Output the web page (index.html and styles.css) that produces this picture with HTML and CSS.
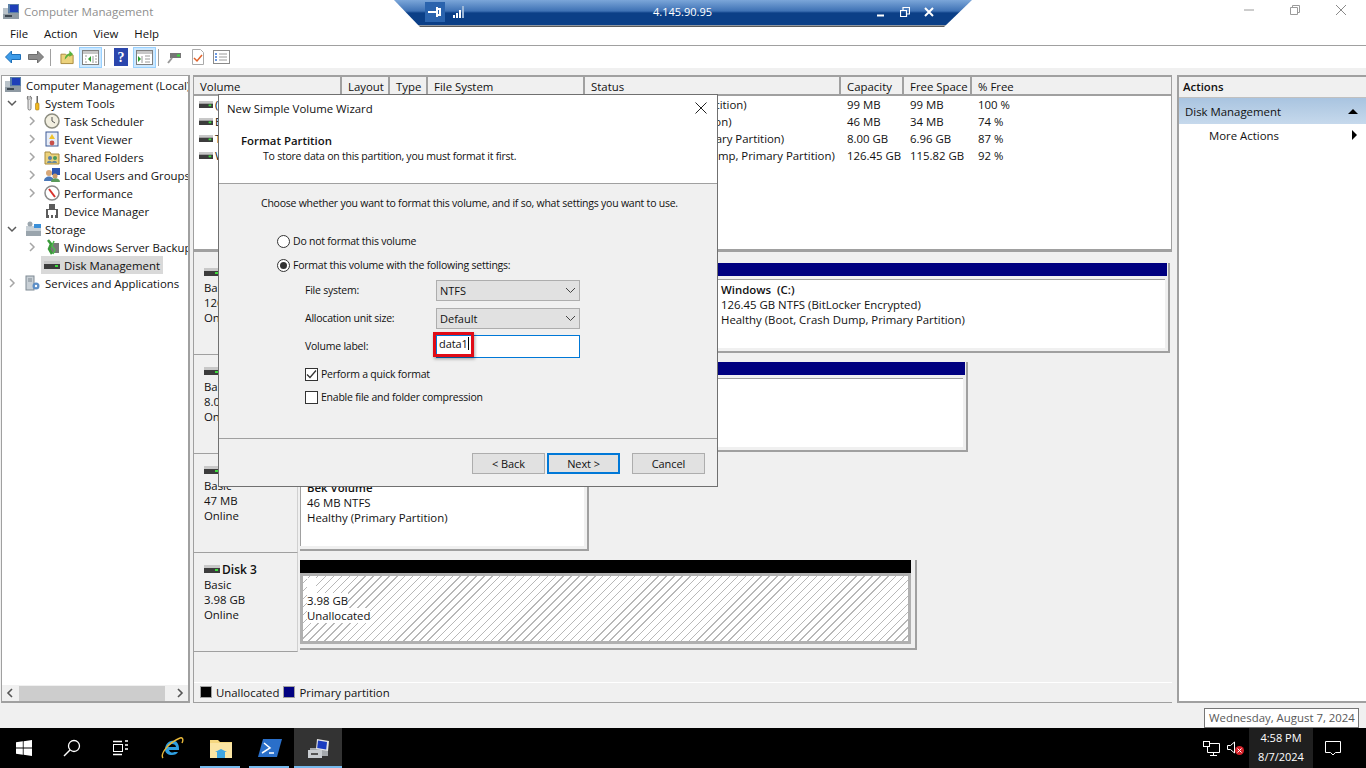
FILE: index.html
```html
<!DOCTYPE html>
<html>
<head>
<title>Computer Management</title>
<link rel="stylesheet" href="styles.css">
</head>
<body>

<svg class="defs" width="0" height="0">
  <symbol id="disk" viewBox="0 0 16 10">
    <rect x="0" y="1" width="16" height="3" fill="#c8c8c8"/>
    <rect x="0" y="4" width="16" height="5" fill="#3c3c3c"/>
    <rect x="11" y="5" width="3" height="2" fill="#3ddc3d"/>
  </symbol>
  <symbol id="computer" viewBox="0 0 18 18">
    <rect x="6" y="1" width="11" height="9" fill="#5b7fa8"/>
    <rect x="8" y="2" width="8" height="7" fill="#1f3fb8"/>
    <rect x="1" y="10" width="16" height="6" fill="#8f9aa3"/>
    <rect x="3" y="12" width="7" height="2" fill="#3c4650"/>
    <rect x="1" y="5" width="5" height="6" fill="#b9c2c9"/>
  </symbol>
  <symbol id="open" viewBox="0 0 10 10">
    <path d="M1 3l4 4 4-4" fill="none" stroke="#5a5a5a" stroke-width="1.5"/>
  </symbol>
  <symbol id="closed" viewBox="0 0 10 10">
    <path d="M3 1l4 4-4 4" fill="none" stroke="#a6a6a6" stroke-width="1.5"/>
  </symbol>
</svg>

<div class="window">
  <div class="titlebar">
    <svg class="app-icon" width="18" height="18"><use href="#computer"/></svg>
    <span class="title-text">Computer Management</span>
    <div class="win-btns">
      <svg width="46" height="20" viewBox="0 0 46 20"><path d="M18 10h10" stroke="#9a9a9a"/></svg>
      <svg width="46" height="20" viewBox="0 0 46 20"><path d="M18.5 7.5h7v7h-7zM20.5 7.5v-2h7v7h-2" fill="none" stroke="#9a9a9a"/></svg>
      <svg width="46" height="20" viewBox="0 0 46 20"><path d="M18 5l10 10M28 5l-10 10" stroke="#8a8a8a"/></svg>
    </div>
  </div>

  <div class="menubar">
    <span>File</span><span>Action</span><span>View</span><span>Help</span>
  </div>

  <div class="toolbar">
    <svg class="tb-back" width="16" height="14" viewBox="0 0 16 14"><path d="M.5 7l6-6v3.500h9v5h-9v3.500z" fill="#3d9be8" stroke="#1d6fb8"/></svg>
    <svg class="tb-fwd" width="16" height="14" viewBox="0 0 16 14"><path d="M15.500 7l-6-6v3.500h-9v5h9v3.500z" fill="#8c8c8c" stroke="#6e6e6e"/></svg>
    <i class="tb-sep first"></i>
    <svg class="tb-up" width="15" height="16" viewBox="0 0 16 16"><path d="M1 5h5l1 1h7v9H1z" fill="#ecd27c" stroke="#a88a3c"/><path d="M5 11c0-4 2-6 5-7V1l4 4-4 3V6c-2 1-3 3-5 5z" fill="#58b03c"/></svg>
    <span class="tb-on"><svg width="17" height="15" viewBox="0 0 17 15"><rect x=".5" y=".5" width="16" height="14" fill="#fff" stroke="#7f7f7f"/><rect x="1" y="1" width="15" height="3" fill="#c7c7c7"/><path d="M11 6v7M3 6h2M3 9h1M3 12h2" stroke="#9a9a9a"/><path d="M9 6L6 9l3 3z" fill="#2e9e2e"/><path d="M13 6h2M13 9h2M13 12h2" stroke="#9a9a9a"/></svg></span>
    <i class="tb-sep"></i>
    <svg class="tb-help" width="14" height="18" viewBox="0 0 14 18"><rect width="14" height="18" fill="#2b46ad"/><text x="7" y="14" text-anchor="middle" class="help-q">?</text></svg>
    <span class="tb-on tb-on2"><svg width="17" height="15" viewBox="0 0 17 15"><rect x=".5" y=".5" width="16" height="14" fill="#fff" stroke="#7f7f7f"/><rect x="1" y="1" width="15" height="3" fill="#c7c7c7"/><path d="M6 6v7M9 6h5M9 9h5M9 12h5" stroke="#9a9a9a"/><path d="M2 6l3 3-3 3z" fill="#2e9e2e"/></svg></span>
    <i class="tb-sep"></i>
    <svg class="tb-conn" width="15" height="14" viewBox="0 0 15 14"><path d="M3 3h11v5H3z" fill="#777"/><rect x="10" y="4.500" width="3" height="2" fill="#3ddc3d"/><path d="M5 8L1 13" stroke="#999" stroke-width="2"/></svg>
    <svg class="tb-doc" width="12" height="16" viewBox="0 0 12 16"><path d="M.5.5h8l3 3v12H.5z" fill="#fff" stroke="#aaa"/><path d="M2 9l3 3 5-6" fill="none" stroke="#e0622a" stroke-width="1.5"/></svg>
    <svg class="tb-list" width="17" height="14" viewBox="0 0 17 14"><rect x=".5" y=".5" width="16" height="13" fill="#fff" stroke="#8a8a8a"/><path d="M6 4h8M6 7h8M6 10h8" stroke="#9a9a9a"/><path d="M2 4h2M2 7h2M2 10h2" stroke="#3b78d8" stroke-width="1.5"/></svg>
  </div>

  <div class="main">
    <div class="tree">
      <div class="tree-rows">
        <div class="node"><svg width="18" height="18"><use href="#computer"/></svg><span>Computer Management (Local)</span></div>
        <div class="node lvl1">
          <svg class="arrow" width="10" height="10"><use href="#open"/></svg>
          <svg class="ico" width="16" height="16" viewBox="0 0 16 16"><path d="M3 1v2.500l1 1 1-1V1c2 1 2 3 1 4v8.500a1.500 1.500 0 0 1-3 0V5C2 4 2 2 3 1z" fill="#e4e4e4" stroke="#666" stroke-width=".8"/><rect x="11.500" y="1" width="1.500" height="7" fill="#666"/><rect x="10.500" y="8" width="3.500" height="7" rx="1" fill="#f0b820" stroke="#a87a10" stroke-width=".6"/></svg>
          <span>System Tools</span>
        </div>
        <div class="node lvl2">
          <svg class="arrow" width="10" height="10"><use href="#closed"/></svg>
          <svg class="ico" width="16" height="16" viewBox="0 0 16 16"><circle cx="8" cy="8" r="7" fill="#f2efe0" stroke="#8d8d80" stroke-width="1.5"/><path d="M8 4v4l3 2" fill="none" stroke="#555"/></svg>
          <span>Task Scheduler</span>
        </div>
        <div class="node lvl2">
          <svg class="arrow" width="10" height="10"><use href="#closed"/></svg>
          <svg class="ico" width="16" height="16" viewBox="0 0 16 16"><rect x="2" y="1" width="12" height="14" fill="#e8eef8" stroke="#3c5a96"/><path d="M8 3l3 5H5z" fill="#eec22c"/><circle cx="8" cy="12" r="2.4" fill="#c8504a"/></svg>
          <span>Event Viewer</span>
        </div>
        <div class="node lvl2">
          <svg class="arrow" width="10" height="10"><use href="#closed"/></svg>
          <svg class="ico" width="16" height="16" viewBox="0 0 16 16"><path d="M1 3h5l1 2h8v10H1z" fill="#ecd27c" stroke="#a88a3c"/><circle cx="6" cy="9" r="2" fill="#5a7fa8"/><circle cx="11" cy="9" r="2" fill="#4a9a5a"/><path d="M3 14c0-3 5-3 5 0zM8 14c0-3 5-3 5 0z" fill="#6a8a9a"/></svg>
          <span>Shared Folders</span>
        </div>
        <div class="node lvl2">
          <svg class="arrow" width="10" height="10"><use href="#closed"/></svg>
          <svg class="ico" width="16" height="16" viewBox="0 0 16 16"><rect x="8" y="1" width="8" height="7" fill="#2c55b0"/><circle cx="5" cy="6" r="3" fill="#d8a878"/><path d="M0 14c0-6 10-6 10 0z" fill="#4a78b8"/><circle cx="11" cy="9" r="2.5" fill="#c89868"/><path d="M7 15c0-5 9-5 9 0z" fill="#5a9a5a"/></svg>
          <span>Local Users and Groups</span>
        </div>
        <div class="node lvl2">
          <svg class="arrow" width="10" height="10"><use href="#closed"/></svg>
          <svg class="ico" width="16" height="16" viewBox="0 0 16 16"><circle cx="8" cy="8" r="7" fill="#fff" stroke="#8a8a8a" stroke-width="1.5"/><path d="M5 4l6 8" stroke="#d8322c" stroke-width="2"/></svg>
          <span>Performance</span>
        </div>
        <div class="node lvl2">
          <i class="arrow-gap"></i>
          <svg class="ico" width="16" height="16" viewBox="0 0 16 16"><path d="M5 1h6v5h3v9H2V6h3z" fill="#5c5c5c"/><rect x="4" y="7" width="8" height="5" fill="#fff"/><rect x="5" y="12" width="2" height="3" fill="#fff"/><rect x="9" y="12" width="2" height="3" fill="#fff"/></svg>
          <span>Device Manager</span>
        </div>
        <div class="node lvl1">
          <svg class="arrow" width="10" height="10"><use href="#open"/></svg>
          <svg class="ico" width="16" height="16" viewBox="0 0 16 16"><rect x="1" y="10" width="15" height="5" fill="#9aa5ad"/><rect x="1" y="5" width="15" height="5" fill="#c8d0d6"/><rect x="9" y="3" width="7" height="4" fill="#3a8fd8"/><circle cx="5" cy="3" r="2.5" fill="#9aa5ad"/></svg>
          <span>Storage</span>
        </div>
        <div class="node lvl2">
          <svg class="arrow" width="10" height="10"><use href="#closed"/></svg>
          <svg class="ico" width="16" height="16" viewBox="0 0 16 16"><rect x="6" y="4" width="9" height="10" fill="#777"/><path d="M4 1l3 4-2 5 3 5" fill="none" stroke="#3a9a3a" stroke-width="2.5"/><path d="M10 2l-2 5 3 4-2 4" fill="none" stroke="#4cba4c" stroke-width="1.500"/></svg>
          <span>Windows Server Backup</span>
        </div>
        <div class="node lvl2 selected">
          <i class="arrow-gap"></i>
          <svg class="ico" width="16" height="10"><use href="#disk"/></svg>
          <span>Disk Management</span>
        </div>
        <div class="node lvl1">
          <svg class="arrow" width="10" height="10"><use href="#closed"/></svg>
          <svg class="ico" width="16" height="16" viewBox="0 0 16 16"><rect x="1" y="1" width="8" height="14" fill="#c9d0d6" stroke="#7f8a93"/><path d="M3 4h4M3 6h4" stroke="#7f8a93"/><circle cx="11" cy="11" r="3.500" fill="#5d8fc7"/><circle cx="11" cy="11" r="1.200" fill="#fff"/></svg>
          <span>Services and Applications</span>
        </div>
      </div>
      <div class="hscroll">
        <svg width="8" height="10" viewBox="0 0 8 10"><path d="M6 1L2 5l4 4" fill="none" stroke="#555" stroke-width="1.6"/></svg>
        <i class="thumb"></i>
        <svg width="8" height="10" viewBox="0 0 8 10"><path d="M2 1l4 4-4 4" fill="none" stroke="#555" stroke-width="1.6"/></svg>
      </div>
    </div>

    <div class="center">
      <div class="listview">
        <div class="cols head">
          <div>Volume</div><div>Layout</div><div>Type</div><div>File System</div><div>Status</div><div>Capacity</div><div>Free Space</div><div>% Free</div>
        </div>
        <div class="cols row">
          <div class="vol"><svg width="14" height="9"><use href="#disk"/></svg>(Disk 0 partition 1)</div><div></div><div></div><div></div><div>Healthy (EFI System Partition)</div><div>99 MB</div><div>99 MB</div><div>100 %</div>
        </div>
        <div class="cols row">
          <div class="vol"><svg width="14" height="9"><use href="#disk"/></svg>Bek Volume</div><div></div><div></div><div></div><div>Healthy (Primary Partition)</div><div>46 MB</div><div>34 MB</div><div>74 %</div>
        </div>
        <div class="cols row">
          <div class="vol"><svg width="14" height="9"><use href="#disk"/></svg>Temporary Storage</div><div></div><div></div><div></div><div>Healthy (Page File, Primary Partition)</div><div>8.00 GB</div><div>6.96 GB</div><div>87 %</div>
        </div>
        <div class="cols row">
          <div class="vol"><svg width="14" height="9"><use href="#disk"/></svg>Windows (C:)</div><div></div><div></div><div></div><div>Healthy (Boot, Crash Dump, Primary Partition)</div><div>126.45 GB</div><div>115.82 GB</div><div>92 %</div>
        </div>
      </div>

      <div class="disks">
        <div class="disk">
          <div class="disk-info"><div class="disk-name"><svg width="16" height="10"><use href="#disk"/></svg><b>Disk 0</b></div><div>Basic</div><div>126.64 GB</div><div>Online</div></div>
          <div class="vols w-disk0">
            <div class="part part-small"><div class="part-bar"></div><div class="part-body"></div></div>
            <div class="part part-grow">
              <div class="part-bar"></div>
              <div class="part-body"><b>Windows &nbsp;(C:)</b><div>126.45 GB NTFS (BitLocker Encrypted)</div><div>Healthy (Boot, Crash Dump, Primary Partition)</div></div>
            </div>
          </div>
        </div>
        <div class="disk">
          <div class="disk-info"><div class="disk-name"><svg width="16" height="10"><use href="#disk"/></svg><b>Disk 1</b></div><div>Basic</div><div>8.00 GB</div><div>Online</div></div>
          <div class="vols w-disk1">
            <div class="part part-grow"><div class="part-bar"></div><div class="part-body"></div></div>
          </div>
        </div>
        <div class="disk">
          <div class="disk-info"><div class="disk-name"><svg width="16" height="10"><use href="#disk"/></svg><b>Disk 2</b></div><div>Basic</div><div>47 MB</div><div>Online</div></div>
          <div class="vols w-disk2">
            <div class="part part-grow"><div class="part-bar"></div><div class="part-body"><b>Bek Volume</b><div>46 MB NTFS</div><div>Healthy (Primary Partition)</div></div></div>
          </div>
        </div>
        <div class="disk">
          <div class="disk-info"><div class="disk-name"><svg width="16" height="10"><use href="#disk"/></svg><b>Disk 3</b></div><div>Basic</div><div>3.98 GB</div><div>Online</div></div>
          <div class="vols w-disk3">
            <div class="part part-grow free"><div class="part-bar"></div><div class="hatch"><span>&nbsp;&nbsp;&nbsp;</span><span>3.98 GB</span><span>Unallocated</span></div></div>
          </div>
        </div>
      </div>

      <div class="legend">
        <i class="swatch black"></i><span>Unallocated</span>
        <i class="swatch navy"></i><span>Primary partition</span>
      </div>
    </div>

    <div class="actions">
      <div class="act-head">Actions</div>
      <div class="act-strip"><span>Disk Management</span><i class="tri-up"></i></div>
      <div class="act-item"><span>More Actions</span><i class="tri-right"></i></div>
    </div>
  </div>

  <div class="taskbar">
    <div class="task"><svg width="16" height="16" viewBox="0 0 16 16"><path d="M0 2.3l6.8-1v6.3H0zM7.6 1.2L16 0v7.6H7.6zM0 8.400h6.800v6.300l-6.800-1zM7.600 8.400H16V16l-8.400-1.200z" fill="#fff"/></svg></div>
    <div class="task"><svg width="18" height="18" viewBox="0 0 18 18"><circle cx="11" cy="7" r="5.500" fill="none" stroke="#fff" stroke-width="1.300"/><path d="M7 11l-6 6" stroke="#fff" stroke-width="1.500"/></svg></div>
    <div class="task"><svg width="17" height="16" viewBox="0 0 17 16"><path d="M1 1.500h9M1 14.500h9M13 1h3M13 5h3M13 9h3" stroke="#fff" stroke-width="1.500"/><rect x="1.500" y="4.500" width="9" height="7" fill="none" stroke="#fff"/></svg></div>
    <div class="task pin first-pin"><svg width="24" height="24" viewBox="0 0 24 24"><path d="M18 8c-1-3-4-4-7-3-4 1-6 5-6 8 0 4 3 6 7 6 3 0 5-1 6-3h-4c-1 1-4 1-5-2h10c0-2 0-4-1-6zM8 11c0-2 2-3 4-3s4 1 4 3z" fill="#2f9fe0"/><path d="M3 22C0 18 8 7 20 2c2-1 4 1 2 5" fill="none" stroke="#e8b83a" stroke-width="1.400"/></svg></div>
    <div class="task pin running"><svg width="22" height="20" viewBox="0 0 22 20"><path d="M0 2h8l2 2h12v16H0z" fill="#f5d77f"/><path d="M0 5h22v15H0z" fill="#fbe5a3"/><path d="M7 14h8v6H7z" fill="#3fa5e0"/><path d="M5 14h12l-6-3z" fill="#3fa5e0"/></svg></div>
    <div class="task pin running"><svg width="24" height="18" viewBox="0 0 24 18"><path d="M5 0h19l-5 18H0z" fill="#2a6fc9"/><path d="M6 4l6 5-8 5M11 14h5" fill="none" stroke="#fff" stroke-width="1.500"/></svg></div>
    <div class="task pin running active"><svg width="24" height="24" viewBox="0 0 24 24"><path d="M4 12h18v8H4z" fill="#a4a8ac"/><path d="M2 14h14v8H2z" fill="#c8ccd0"/><path d="M11 3l12 2-1 10-12-2z" fill="#e6e6e6"/><path d="M12 4.500l9 1.500-.8 7.500-9-1.500z" fill="#1a3cc0"/><rect x="5" y="17" width="7" height="2" fill="#555"/></svg></div>

    <div class="tray">
      <svg class="tray-net" width="17" height="15" viewBox="0 0 17 15"><path d="M4.500 2.500h12v9h-12zM10.500 11.500v3M7 14.500h7" fill="none" stroke="#fff"/><rect x=".5" y=".5" width="6" height="5" fill="#000" stroke="#fff"/></svg>
      <svg class="tray-vol" width="18" height="16" viewBox="0 0 18 16"><path d="M.5 5.500h3l4-3.500v11l-4-3.500h-3z" fill="none" stroke="#fff"/><circle cx="12.500" cy="10.500" r="4.500" fill="#d8222a"/><path d="M10.500 8.500l4 4M14.500 8.500l-4 4" stroke="#fff"/></svg>
      <div class="clock"><div>4:58 PM</div><div>8/7/2024</div></div>
      <svg class="tray-note" width="16" height="15" viewBox="0 0 16 15"><path d="M.5.500h15v11h-5l-2.500 2.500-2.500-2.500h-5z" fill="none" stroke="#fff"/></svg>
    </div>
  </div>
</div>

<div class="tooltip">Wednesday, August 7, 2024</div>

<div class="rdp-bar">
  <div class="rdp-left">
    <span class="rdp-pin"><svg width="14" height="10" viewBox="0 0 14 10"><path d="M0 5h9M9 0v10M12 1v8M9 2h3M9 8h3" stroke="#fff" stroke-width="2"/></svg></span>
    <svg width="12" height="12" viewBox="0 0 12 12"><path d="M0 9h2v3H0zM3 7h2v5H3zM6 4h2v8H6z" fill="#fff"/><path d="M9 0h2v12H9z" fill="#9db8d8"/></svg>
  </div>
  <span class="rdp-ip">4.145.90.95</span>
  <div class="rdp-right">
    <svg width="10" height="10" viewBox="0 0 10 10"><path d="M1 8.500h7" stroke="#fff" stroke-width="2"/></svg>
    <svg width="10" height="10" viewBox="0 0 10 10"><path d="M.5 3.500h6v6h-6zM3 3V.5h6.500V7H7" fill="none" stroke="#fff" stroke-width="1.200"/></svg>
    <svg width="10" height="10" viewBox="0 0 10 10"><path d="M1 1l8 8M9 1l-8 8" stroke="#fff" stroke-width="2"/></svg>
  </div>
</div>

<div class="dialog">
  <div class="dlg-top">
    <div class="dlg-title"><span>New Simple Volume Wizard</span>
      <svg width="12" height="12" viewBox="0 0 12 12"><path d="M.5.500l11 11M11.500.500l-11 11" stroke="#222" stroke-width="1"/></svg>
    </div>
    <div class="dlg-h1">Format Partition</div>
    <div class="dlg-h2">To store data on this partition, you must format it first.</div>
  </div>
  <div class="dlg-body">
    <p class="dlg-q">Choose whether you want to format this volume, and if so, what settings you want to use.</p>
    <div class="radio-row"><i class="radio"></i><span>Do not format this volume</span></div>
    <div class="radio-row second"><i class="radio on"></i><span>Format this volume with the following settings:</span></div>
    <div class="fields">
      <label>File system:</label>
      <div class="combo"><span>NTFS</span><svg width="11" height="7" viewBox="0 0 11 7"><path d="M1 1l4.500 4.500L10 1" fill="none" stroke="#444"/></svg></div>
      <label>Allocation unit size:</label>
      <div class="combo"><span>Default</span><svg width="11" height="7" viewBox="0 0 11 7"><path d="M1 1l4.500 4.500L10 1" fill="none" stroke="#444"/></svg></div>
      <label>Volume label:</label>
      <div class="textbox"><span>data1</span><i class="caret"></i><i class="redbox"></i></div>
    </div>
    <div class="check-row"><i class="check"><svg width="11" height="11" viewBox="0 0 11 11"><path d="M1 5.500l3 3 6-7" fill="none" stroke="#333" stroke-width="1.300"/></svg></i><span>Perform a quick format</span></div>
    <div class="check-row second"><i class="check"></i><span>Enable file and folder compression</span></div>
  </div>
  <div class="dlg-foot">
    <button class="btn">&lt; Back</button>
    <button class="btn default">Next &gt;</button>
    <button class="btn cancel">Cancel</button>
  </div>
</div>

</body>
</html>
```

FILE: styles.css
```css
html, body {
    margin: 0;
    padding: 0;
    height: 100%;
    overflow: hidden;
}
body {
    background: #f0f0f0;
    font-family: "Open Sans", "Liberation Sans", sans-serif;
    font-size: 11.4px;
    color: #111;
}
svg {
    display: block;
    flex: none;
}
.defs {
    position: absolute;
}
b {
    font-weight: 600;
}

.window {
    display: flex;
    flex-direction: column;
    height: 768px;
}

/* title bar */
.titlebar {
    height: 24px;
    background: #fff;
    display: flex;
    align-items: center;
    padding-left: 2px;
}
.title-text {
    margin: 0 0 2px 4px;
    color: #8f8f8f;
    font-size: 11.6px;
}
.win-btns {
    margin-left: auto;
    margin-right: 2px;
    display: flex;
    align-self: flex-start;
}

.menubar {
    background: #fff;
    display: flex;
    align-items: center;
    border-bottom: 1px solid #a0a0a0;
    padding: 0 0 2px 10px;
    height: 19px;
    gap: 16px;
}
.toolbar {
    height: 22px;
    background: #fff;
    display: flex;
    align-items: center;
    padding-left: 5px;
}
.tb-fwd { margin-left: 7px; }
.tb-sep {
    width: 1px;
    height: 17px;
    background: #a0a0a0;
    margin-left: 2px;
}
.tb-sep.first { margin-left: 6px; }
.tb-up { margin-left: 9px; }
.tb-on {
    width: 21px;
    height: 19px;
    margin-left: 4px;
    background: #cce8ff;
    border: 1px solid #99d1ff;
    display: flex;
    align-items: center;
    justify-content: center;
}
.tb-help { margin-left: 9px; }
.tb-on2 { margin-left: 5px; }
.tb-conn { margin-left: 8px; }
.tb-doc { margin-left: 10px; }
.tb-list { margin-left: 9px; }
.help-q {
    fill: #fff;
    font: bold 14px "Liberation Serif", serif;
}

/* three panes */
.main {
    margin-top: 7px;
    height: 628px;
    display: flex;
    padding-left: 1px;
}
.tree {
    width: 186px;
    flex: none;
    background: #fff;
    border: 1px solid #a0a0a0;
    border-width: 1px 2px 2px 1px;
    display: flex;
    flex-direction: column;
    overflow: hidden;
}
.tree-rows {
    flex: 1;
    white-space: nowrap;
}
.node {
    height: 18px;
    display: flex;
    align-items: center;
    padding-left: 2px;
}
.node span {
    margin-left: 4px;
}
.lvl1 { padding-left: 5px; }
.lvl1 .ico { margin-left: 8px; }
.lvl2 { padding-left: 25px; }
.lvl2 .ico { margin-left: 7px; }
.lvl2 span { padding-right: 3px; }
.arrow, .arrow-gap {
    width: 10px;
    height: 10px;
    flex: none;
}
.selected {
    background: linear-gradient(#d9d9d9, #d9d9d9) no-repeat 39px 0 / 122px 18px;
}
.hscroll {
    height: 16px;
    background: #f0f0f0;
    display: flex;
    align-items: center;
    padding-left: 4px;
    gap: 5px;
}
.thumb {
    width: 146px;
    height: 15px;
    background: #cdcdcd;
    margin-right: 6px;
}

.center {
    margin-left: 3px;
    width: 978px;
    flex: none;
    border: 1px solid #a0a0a0;
    border-top-width: 2px;
    border-right: 0;
    display: flex;
    flex-direction: column;
}
.listview {
    height: 172px;
    background: #fff;
    flex: none;
    border-bottom: 3px solid #a0a0a0;
    border-right: 1px solid #a0a0a0;
}
.cols {
    display: grid;
    grid-template-columns: 148px 48px 38px 157px 256px 63px 68px 1fr;
    white-space: nowrap;
}
.cols > div {
    overflow: hidden;
}
.head {
    height: 17px;
    background: #f0f0f0;
    border-bottom: 2px solid #a0a0a0;
}
.head > div {
    padding: 1px 0 0 6px;
    border-right: 2px solid #a0a0a0;
    line-height: 17px;
}
.head > div:last-child {
    border-right: 0;
}
.row {
    height: 17px;
    line-height: 17px;
}
.row > div {
    padding-left: 6px;
}
.row > .vol {
    padding: 0 124px 0 5px;
    display: flex;
    align-items: center;
    gap: 2px;
}

.disks {
    flex: 1;
    padding-top: 4px;
    background: #f0f0f0;
    overflow: hidden;
}
.disk {
    height: 99px;
    display: flex;
    line-height: 15px;
}
.disk-info {
    width: 93px;
    flex: none;
    padding: 8px 0 0 10px;
    border-bottom: 1px solid #a0a0a0;
    border-right: 1px solid #d0d0d0;
    height: 90px;
}
.disk-name {
    display: flex;
    align-items: center;
    gap: 2px;
    font-size: 12px;
    height: 16px;
}
.vols {
    margin: 7px 0 0 2px;
    height: 85px;
    flex: none;
    display: flex;
    border: solid #a0a0a0;
    border-width: 0 2px 2px 0;
    padding: 0 1px 3px 0;
}
.w-disk0 { width: 867px; }
.w-disk1 { width: 665px; }
.w-disk2 { width: 286px; }
.w-disk3 { width: 614px; }
.part {
    display: flex;
    flex-direction: column;
}
.part-small { width: 414px; flex: none; }
.part-grow { flex: 1; min-width: 0; }
.part-bar {
    height: 13px;
    background: #000080;
    flex: none;
}
.part-body {
    flex: 1;
    margin: 3px 2px 0 0;
    padding: 2px 0 0 6px;
    background: #fff;
    border: solid #a0a0a0;
    border-width: 1px 0 0 1px;
    white-space: nowrap;
}
.free {
    margin: 0 3px 1px 0;
}
.free .part-bar {
    background: #000;
}
.hatch {
    flex: 1;
    display: flex;
    flex-direction: column;
    align-items: flex-start;
    border: 3px solid #b0b0b0;
    padding-top: 2px;
    padding-left: 4px;
    background: repeating-linear-gradient(135deg, #fff 0 4.6px, #b8b8b8 4.6px 5.6px);
}
.hatch span {
    background: #fff;
}

.legend {
    height: 18px;
    flex: none;
    display: flex;
    align-items: center;
    background: #f0f0f0;
    border-top: 1px solid #fff;
    padding: 0 0 1px 6px;
}
.swatch {
    width: 10px;
    height: 10px;
    border: 1px solid #a0a0a0;
    margin-right: 4px;
}
.swatch.black { background: #000; }
.swatch.navy { background: #000080; margin-left: 4px; }

.actions {
    margin-left: 5px;
    flex: 1;
    background: #fff;
    border: solid #a0a0a0;
    border-width: 2px 0 2px 2px;
}
.act-head {
    height: 20px;
    line-height: 20px;
    padding-left: 4px;
    font-weight: 600;
    background: #f0f0f0;
    border-bottom: 1px solid #c0c0c0;
}
.act-strip {
    height: 26px;
    background: linear-gradient(#a9c4e0, #c6d9ec);
    display: flex;
    align-items: center;
    justify-content: space-between;
    padding: 0 8px 0 6px;
}
.act-item {
    height: 22px;
    display: flex;
    align-items: center;
    justify-content: space-between;
    padding: 0 9px 0 30px;
}
.tri-up {
    border: 5px solid transparent;
    border-top: 0;
    border-bottom: 5px solid #000;
}
.tri-right {
    border: 5px solid transparent;
    border-right: 0;
    border-left: 5px solid #000;
}

/* taskbar */
.taskbar {
    margin-top: 25px;
    height: 40px;
    background: #000;
    display: flex;
    color: #fff;
}
.task {
    width: 48px;
    height: 40px;
    display: flex;
    align-items: center;
    justify-content: center;
    position: relative;
}
.pin { width: 49px; }
.first-pin { margin-left: 3px; }
.active { width: 48px; background: #333; }
.running::after {
    content: "";
    position: absolute;
    left: 4px;
    right: 5px;
    bottom: 0;
    height: 2px;
    background: #76b9ed;
}
.active::after {
    left: 0;
    right: 0;
}
.tray {
    margin-left: auto;
    display: flex;
    align-items: center;
}
.tray-vol { margin-left: 7px; }
.clock {
    margin-left: 4px;
    width: 64px;
    height: 40px;
    background: #1f1f1f;
    text-align: center;
    line-height: 19px;
    font-size: 11px;
}
.tray-note {
    margin: 0 25px 0 12px;
}

.tooltip {
    position: absolute;
    left: 1204px;
    top: 708px;
    width: 155px;
    height: 20px;
    box-sizing: border-box;
    background: #fff;
    border: 1px solid #767676;
    color: #575757;
    line-height: 18px;
    padding-left: 4px;
    white-space: nowrap;
}

/* remote desktop connection bar */
.rdp-bar {
    position: absolute;
    left: 394px;
    top: 0;
    width: 578px;
    height: 27px;
    box-sizing: border-box;
    padding: 0 38px 0 31px;
    clip-path: polygon(0 0, 100% 0, 550px 100%, 26px 100%);
    background: linear-gradient(#7ba6d9 0, #3f72b5 11px, #0b3f87 13px, #0b3f87 25px, #c4d4e8 25px, #5a5a5a 26px);
    color: #fff;
    display: flex;
    align-items: center;
    justify-content: space-between;
}
.rdp-left, .rdp-right {
    display: flex;
    align-items: center;
    margin-bottom: 4px;
}
.rdp-left { gap: 8px; }
.rdp-right { gap: 14px; }
.rdp-pin {
    width: 20px;
    height: 20px;
    background: #2a63ad;
    display: flex;
    align-items: center;
    justify-content: center;
}
.rdp-ip {
    margin-bottom: 4px;
    margin-left: 24px;
    font-size: 11px;
}

/* wizard dialog */
.dialog {
    position: absolute;
    left: 218px;
    top: 94px;
    width: 500px;
    height: 393px;
    box-sizing: border-box;
    border: 1px solid #707070;
    background: #f0f0f0;
    display: flex;
    flex-direction: column;
}
.dlg-top {
    height: 88px;
    flex: none;
    background: #fff;
    border-bottom: 1px solid #a0a0a0;
}
.dlg-title {
    height: 28px;
    display: flex;
    align-items: center;
    justify-content: space-between;
    padding: 0 10px 2px 8px;
    box-sizing: border-box;
}
.dlg-h1 {
    margin: 10px 0 0 22px;
    font-weight: 600;
    line-height: 16px;
}
.dlg-h2 {
    margin-left: 44px;
    line-height: 15px;
    font-size: 10.5px;
    letter-spacing: -0.23px;
}
.dlg-body {
    flex: 1;
    padding-left: 42px;
    font-size: 10.5px;
    letter-spacing: -0.23px;
}
.dlg-q {
    margin: 11px 0 0;
    line-height: 16px;
}
.radio-row {
    margin: 22px 0 0 16px;
    display: flex;
    align-items: center;
    height: 16px;
}
.radio-row.second {
    margin-top: 8px;
}
.radio {
    width: 11px;
    height: 11px;
    border: 1px solid #333;
    border-radius: 50%;
    background: #fff;
    margin-right: 3px;
    position: relative;
}
.radio.on::after {
    content: "";
    position: absolute;
    left: 2px;
    top: 2px;
    width: 7px;
    height: 7px;
    border-radius: 50%;
    background: #333;
}
.fields {
    margin: 7px 0 0 44px;
    display: grid;
    grid-template-columns: 131px 144px;
    grid-auto-rows: 21px;
    row-gap: 7px;
    align-items: center;
}
.fields label {
    margin-top: -1px;
}
.combo {
    height: 21px;
    box-sizing: border-box;
    background: #e1e1e1;
    border: 1px solid #adadad;
    display: flex;
    align-items: center;
    justify-content: space-between;
    padding: 0 3px 0 3px;
    font-size: 11px;
    letter-spacing: 0;
}
.textbox {
    height: 23px;
    box-sizing: border-box;
    background: #fff;
    border: 1px solid #0078d7;
    display: flex;
    align-items: center;
    padding: 0 0 6px 2px;
    position: relative;
    font-size: 11px;
    letter-spacing: -0.1px;
}
.caret {
    width: 1px;
    height: 13px;
    background: #000;
}
.redbox {
    position: absolute;
    left: -4px;
    top: -4px;
    width: 35px;
    height: 19px;
    border: 3px solid #e00b16;
    box-shadow: 1px 2px 3px rgba(0, 0, 0, 0.35);
}
.check-row {
    margin: 9px 0 0 44px;
    display: flex;
    align-items: center;
    height: 16px;
}
.check-row.second {
    margin-top: 7px;
}
.check {
    width: 11px;
    height: 11px;
    border: 1px solid #333;
    background: #fff;
    margin-right: 3px;
}
.dlg-foot {
    height: 48px;
    box-sizing: border-box;
    flex: none;
    border-top: 1px solid #a0a0a0;
    display: flex;
    align-items: flex-start;
    padding: 14px 0 0 253px;
    gap: 2px;
}
.btn {
    width: 73px;
    height: 21px;
    padding: 0;
    background: #e1e1e1;
    border: 1px solid #adadad;
    font: inherit;
    font-size: 11px;
    letter-spacing: -0.1px;
    color: #111;
}
.btn.default {
    border: 2px solid #0078d7;
}
.btn.cancel {
    margin-left: 10px;
}
```
